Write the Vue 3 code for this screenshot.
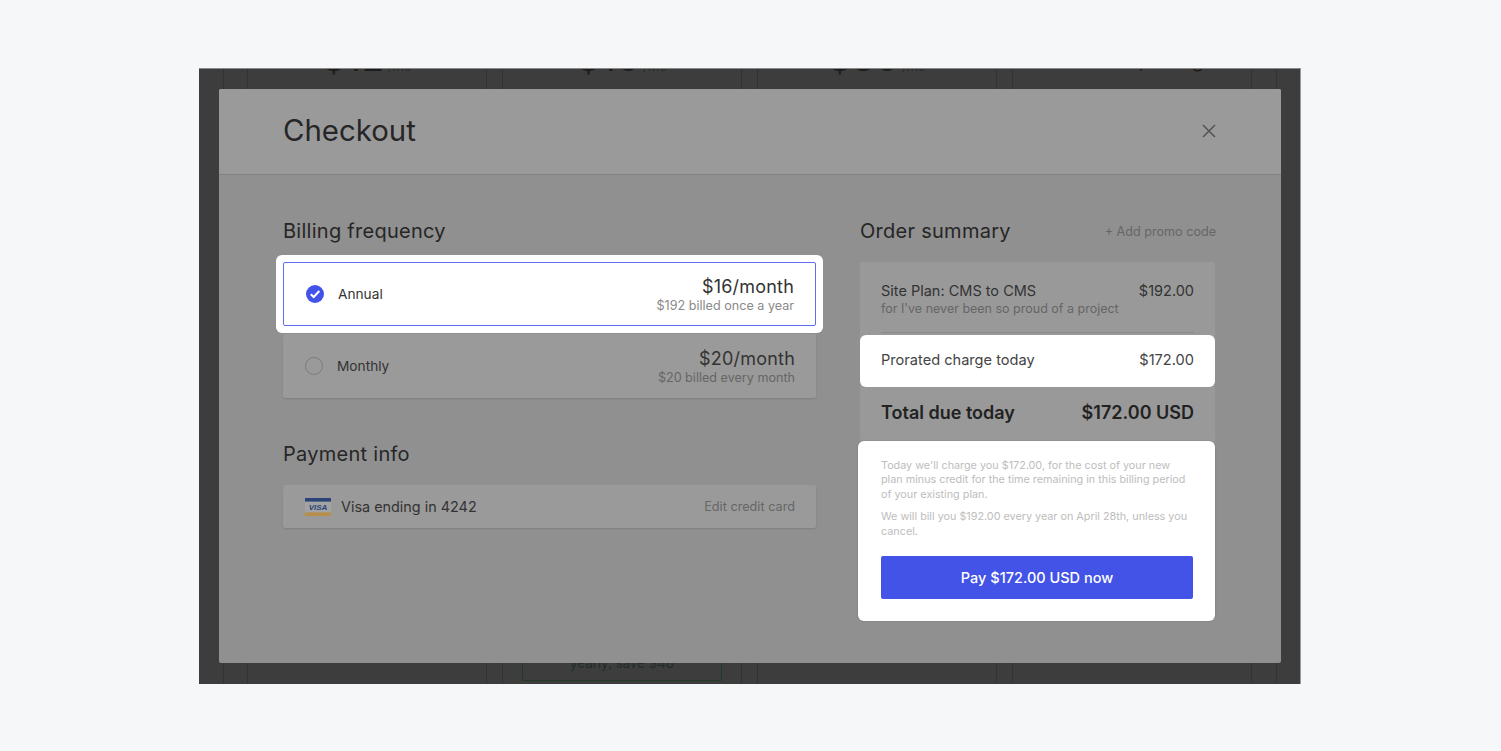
<script setup>
const columns = [
  { price: '$12', unit: '/mo' },
  { price: '$16', unit: '/mo' },
  { price: '$36', unit: '/mo' },
  { price: 'Custom pricing', unit: '', text: true }
]
</script>

<template>
  <main class="page">
    <section class="frame">
      <div class="behind">
        <div v-for="(c, i) in columns" :key="i" class="plan">
          <div class="plan-price" :class="{ wordy: c.text }">
            <span class="amount">{{ c.price }}</span><span class="unit">{{ c.unit }}</span>
          </div>
          <div v-if="i === 1" class="plan-cta">yearly, save $48</div>
        </div>
      </div>

      <div class="modal">
        <header class="modal-head">
          <h1>Checkout</h1>
          <svg class="close" width="16" height="16" viewBox="0 0 16 16" aria-label="Close">
            <path d="M2 2 14 14M14 2 2 14" fill="none" stroke="#555" stroke-width="1.6" />
          </svg>
        </header>

        <div class="modal-body">
          <div class="left">
            <h2>Billing frequency</h2>
            <div class="ring">
              <div class="option selected">
                <svg class="radio" width="18" height="18" viewBox="0 0 18 18">
                  <circle cx="9" cy="9" r="9" fill="#4353e8" />
                  <path d="M4.8 9.2 7.7 12 13.3 6" fill="none" stroke="#fff" stroke-width="2" />
                </svg>
                <span class="opt-name">Annual</span>
                <div class="opt-price">
                  <div class="big">$16/month</div>
                  <div class="small">$192 billed once a year</div>
                </div>
              </div>
            </div>
            <div class="option">
              <span class="radio empty"></span>
              <span class="opt-name">Monthly</span>
              <div class="opt-price">
                <div class="big">$20/month</div>
                <div class="small">$20 billed every month</div>
              </div>
            </div>

            <h2 class="pay-title">Payment info</h2>
            <div class="card-row">
              <svg class="visa" width="26" height="18" viewBox="0 0 26 18">
                <rect width="26" height="18" fill="#a3a3a3" />
                <rect width="26" height="3.6" fill="#2a4478" />
                <rect y="14.4" width="26" height="3.6" fill="#b78f4a" />
                <text x="13" y="11.8" text-anchor="middle" class="visa-text">VISA</text>
              </svg>
              <span class="card-name">Visa ending in 4242</span>
              <span class="edit">Edit credit card</span>
            </div>
          </div>

          <div class="right">
            <div class="summary-head">
              <h2>Order summary</h2>
              <span class="promo">+ Add promo code</span>
            </div>
            <div class="summary">
              <div class="site-row">
                <div class="line">
                  <span>Site Plan: CMS to CMS</span>
                  <span>$192.00</span>
                </div>
                <div class="sub">for I've never been so proud of a project</div>
              </div>
              <div class="prorated line">
                <span>Prorated charge today</span>
                <span>$172.00</span>
              </div>
              <div class="total line">
                <span>Total due today</span>
                <span>$172.00 USD</span>
              </div>
              <div class="pay-box">
                <p>Today we'll charge you $172.00, for the cost of your new plan minus credit for the time remaining in this billing period of your existing plan.</p>
                <p>We will bill you $192.00 every year on April 28th, unless you cancel.</p>
                <button class="pay">Pay $172.00 USD now</button>
              </div>
            </div>
          </div>
        </div>
      </div>
    </section>
  </main>
</template>

<style>
body { margin: 0; background: #f6f7f9; }
</style>

<style scoped>
.page {
  height: 751px;
  box-sizing: border-box;
  padding: 68px 199px 0;
  font-family: Inter, "Liberation Sans", sans-serif;
  color: #262626;
}
.frame {
  position: relative;
  width: 1102px;
  height: 616px;
  box-sizing: border-box;
  padding: 20px 19px 0 20px;
  overflow: hidden;
  background: #3d3d3d;
  border-top: 1px solid #8a8a8a;
  border-right: 1px solid #9a9a9a;
}
.behind {
  position: absolute;
  top: 0;
  bottom: 0;
  left: 24px;
  width: 1054px;
  box-sizing: border-box;
  padding-left: 23px;
  border-left: 1px solid #333;
  border-right: 1px solid #333;
  display: grid;
  grid-template-columns: repeat(4, 240px);
  column-gap: 15px;
}
.plan {
  position: relative;
  border-left: 1px solid #333;
  border-right: 1px solid #333;
}
.plan-price {
  margin-top: -29px;
  height: 36px;
  line-height: 36px;
  text-align: center;
  color: #1c1c1c;
  white-space: nowrap;
}
.amount { font-size: 36px; letter-spacing: 1px; }
.unit { margin-left: 3px; font-size: 13px; color: #2a2a2a; }
.wordy { margin-top: -27px; }
.wordy .amount { font-size: 20px; letter-spacing: 0; }
.wordy .unit { display: none; }
.plan-cta {
  position: absolute;
  left: 19px;
  top: 577px;
  width: 200px;
  height: 35px;
  box-sizing: border-box;
  border: 1px solid #203a27;
  border-radius: 2px;
  text-align: center;
  font-size: 13.3px;
  line-height: 33px;
  color: #232e26;
}
.modal {
  position: relative;
  height: 574px;
  background: #909090;
  border-radius: 2px;
}
.modal-head {
  height: 86px;
  box-sizing: border-box;
  padding: 0 64px 1px;
  display: flex;
  align-items: center;
  justify-content: space-between;
  background: #9a9a9a;
  border-bottom: 1px solid #828282;
  border-radius: 2px 2px 0 0;
}
h1 { margin: 0; font-size: 29.4px; line-height: 36px; font-weight: 400; }
.modal-body {
  display: flex;
  justify-content: space-between;
  padding: 42px 65px 0 64px;
}
.left { width: 533px; }
.right { width: 356px; }
h2 { margin: 0; font-size: 20px; line-height: 28px; font-weight: 400; letter-spacing: .27px; color: #262626; }
.option {
  height: 64px;
  box-sizing: border-box;
  margin-top: 8px;
  padding: 0 21px 0 22px;
  display: flex;
  align-items: center;
  background: #9a9a9a;
  border-radius: 2px;
  box-shadow: 0 1px 2px rgba(0, 0, 0, .12);
  font-size: 13.7px;
}
.ring {
  margin: 10px -7px -7px;
  padding: 7px;
  background: #fff;
  border-radius: 6px;
  position: relative;
}
.selected {
  margin-top: 0;
  background: #fff;
  border: 1px solid #5f6ef0;
  box-shadow: none;
  padding: 0 21px 0 22px;
}
.radio { flex: none; }
.radio.empty {
  width: 18px;
  height: 18px;
  box-sizing: border-box;
  border: 1px solid #7c7c7c;
  border-radius: 50%;
}
.opt-name { margin-left: 14px; color: #333; }
.opt-price { margin-left: auto; padding-top: 1px; text-align: right; }
.big { font-size: 18px; line-height: 21px; letter-spacing: .2px; color: #333; }
.small { font-size: 12.6px; line-height: 17px; color: #666; }
.selected .small { color: #8a8a8a; }
.pay-title { margin-top: 42px; }
.card-row {
  height: 43px;
  margin-top: 17px;
  box-sizing: border-box;
  padding: 0 21px 0 22px;
  display: flex;
  align-items: center;
  background: #9a9a9a;
  border-radius: 2px;
  box-shadow: 0 1px 2px rgba(0, 0, 0, .12);
}
.visa { flex: none; }
.visa-text { font: italic 700 8px "Liberation Sans", sans-serif; fill: #2a4478; }
.card-name { margin-left: 10px; font-size: 14.4px; color: #333; }
.edit { margin-left: auto; font-size: 12.7px; color: #666; }
.summary-head {
  display: flex;
  align-items: center;
  justify-content: space-between;
}
.promo { font-size: 12.6px; color: #666; }
.summary {
  margin-top: 17px;
  width: 355px;
  height: 359px;
  background: #999;
  border-radius: 2px;
  display: flex;
  flex-direction: column;
}
.line { display: flex; justify-content: space-between; }
.site-row {
  height: 71px;
  margin: 0 21px 2px;
  box-sizing: border-box;
  padding-top: 19px;
  border-bottom: 1px solid #8a8a8a;
  font-size: 14.5px;
  line-height: 20px;
  color: #333;
}
.sub { font-size: 12.5px; line-height: 15px; color: #666; }
.prorated {
  height: 52px;
  box-sizing: border-box;
  align-items: center;
  padding: 0 21px 3px;
  background: #fff;
  border-radius: 6px;
  font-size: 14.6px;
  color: #444;
}
.total {
  height: 54px;
  box-sizing: border-box;
  align-items: center;
  padding: 0 21px 4px;
  font-size: 18px;
  font-weight: 600;
  color: #222;
}
.pay-box {
  flex: 1;
  margin-left: -2px;
  padding: 18px 22px 0 23px;
  background: #fff;
  border-radius: 6px;
  box-shadow: 0 0 2px rgba(0, 0, 0, .2);
}
.pay-box p {
  margin: 0 0 8px;
  font-size: 10.8px;
  line-height: 14.4px;
  color: #bdbdbd;
}
.pay {
  display: block;
  width: 100%;
  height: 43px;
  margin-top: 17px;
  border: 0;
  border-radius: 2px;
  background: #4353e8;
  color: #fff;
  font: 500 14.5px Inter, sans-serif;
}
</style>
